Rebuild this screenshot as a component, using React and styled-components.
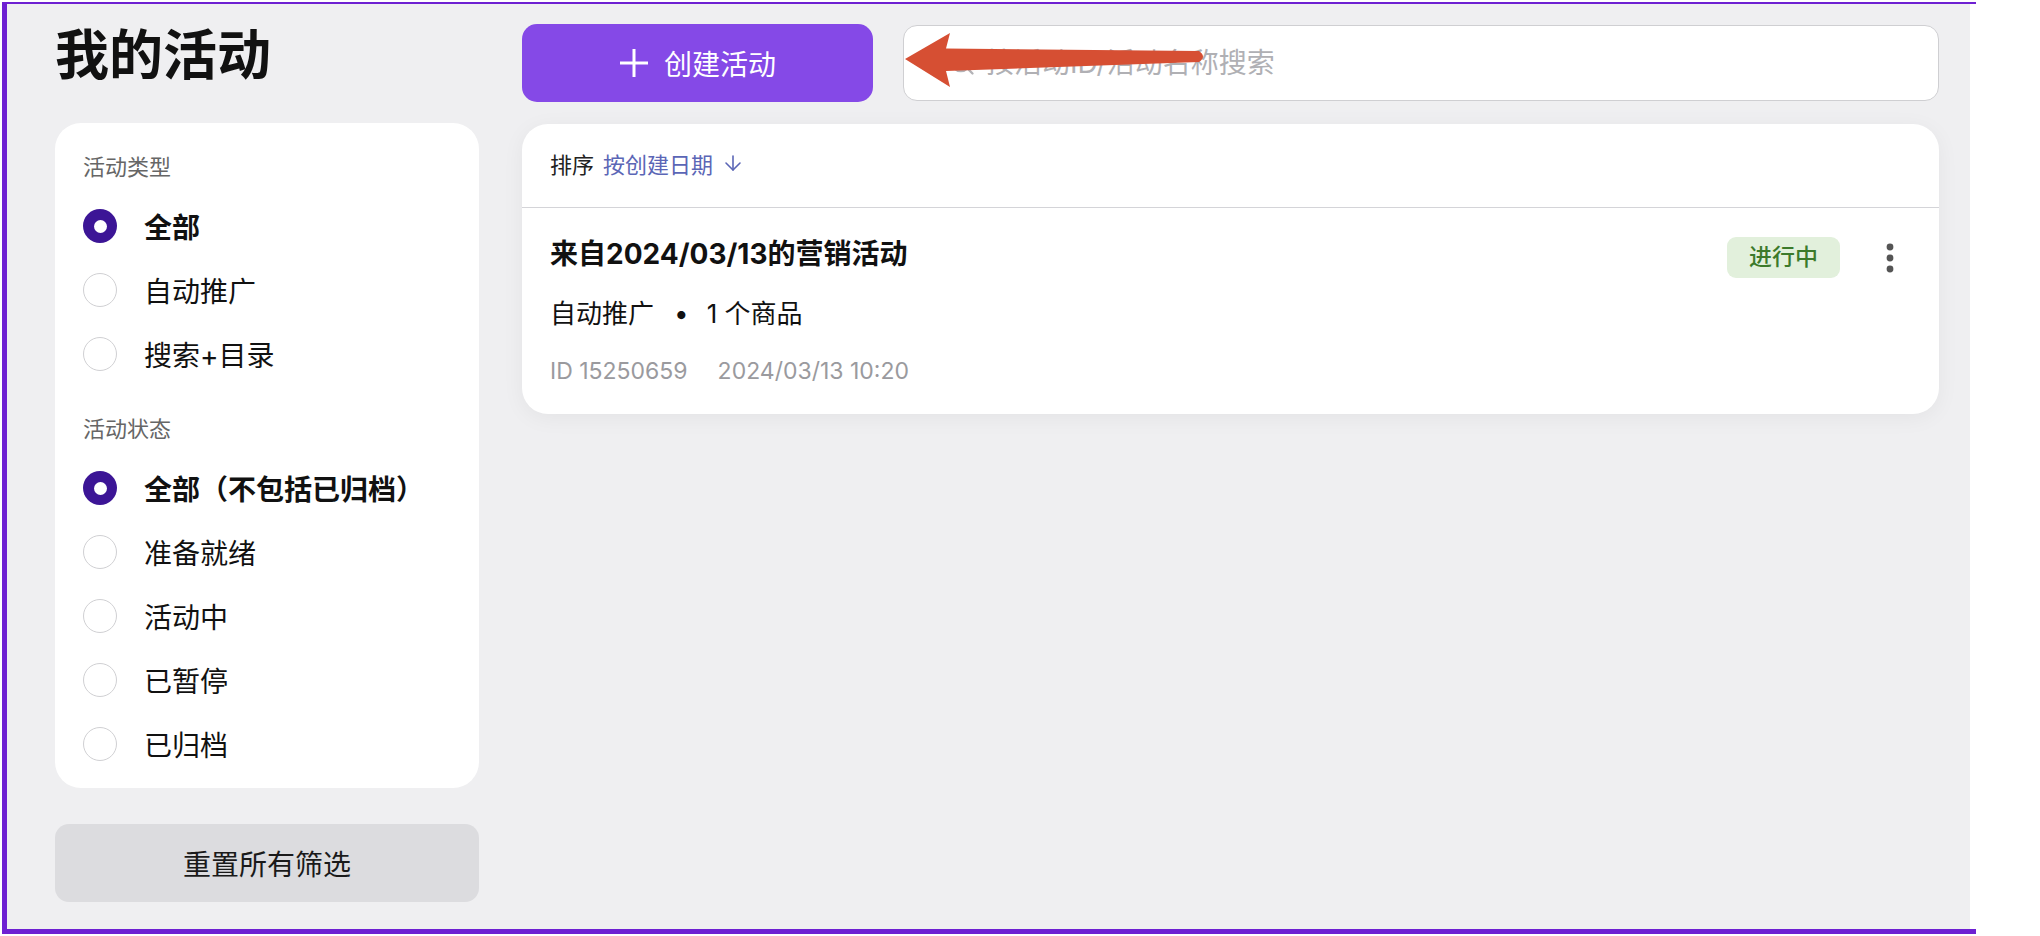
import React from 'react';
import styled, { createGlobalStyle } from 'styled-components';
import { Search, ArrowDown } from 'lucide-react';

const Global = createGlobalStyle`
  html, body { margin: 0; padding: 0; background: #fff; }
  body { font-family: Inter, "Noto Sans CJK SC", sans-serif; color: #111; }
  * { box-sizing: border-box; }
`;

const Frame = styled.div`
  position: relative;
  margin: 2px 0 0 2px;
  width: 1974px;
  height: 932px;
  border-left: 5px solid #6e20d2;
  border-top: 2px solid #6e20d2;
  border-bottom: 5px solid #6e20d2;
  background: linear-gradient(to right, #efeff1 calc(100% - 6px), #fff calc(100% - 6px));
  padding: 20px 37px 0 48px;
  display: grid;
  grid-template-columns: 424px 1fr;
  column-gap: 43px;
  align-items: start;
`;

const Sidebar = styled.aside`
  display: flex;
  flex-direction: column;
`;

const PageTitle = styled.h1`
  margin: 0 0 33px;
  height: 66px;
  font-size: 54px;
  line-height: 64px;
  font-weight: 700;
  color: #111;
`;

const FilterCard = styled.section`
  background: #fff;
  border-radius: 26px;
  padding: 29px 28px 12px;
  display: flex;
  flex-direction: column;
`;

const GroupLabel = styled.div`
  font-size: 22px;
  line-height: 30px;
  color: #666;
  margin-top: ${(p) => (p.$first ? '0' : '28px')};
  margin-bottom: 12px;
`;

const Option = styled.label`
  height: 64px;
  display: flex;
  align-items: center;
  gap: 27px;
  font-size: 28px;
  font-weight: ${(p) => (p.$checked ? 700 : 400)};
  color: #111;
`;

const Radio = styled.span`
  position: relative;
  flex: none;
  width: 34px;
  height: 34px;
  border-radius: 50%;
  background: ${(p) => (p.$checked ? '#3c1596' : '#fff')};
  border: ${(p) => (p.$checked ? 'none' : '1.5px solid #d0d0d3')};
  &::after {
    content: '';
    display: ${(p) => (p.$checked ? 'block' : 'none')};
    position: absolute;
    left: 50%;
    top: 50%;
    width: 13px;
    height: 13px;
    margin: -6.5px 0 0 -6.5px;
    border-radius: 50%;
    background: #fff;
  }
`;

const ResetButton = styled.button`
  margin-top: 36px;
  height: 78px;
  border: none;
  border-radius: 14px;
  background: #dcdcdf;
  font-family: inherit;
  font-size: 28px;
  color: #1a1a1a;
`;

const Main = styled.main`
  display: flex;
  flex-direction: column;
`;

const Toolbar = styled.div`
  display: flex;
  align-items: center;
  gap: 30px;
  height: 78px;
`;

const CreateButton = styled.button`
  flex: none;
  width: 351px;
  height: 78px;
  border: none;
  border-radius: 15px;
  background: #8549e7;
  color: #fff;
  font-family: inherit;
  font-size: 28px;
  display: flex;
  align-items: center;
  justify-content: center;
  gap: 15px;
`;

const SearchBox = styled.label`
  flex: 1;
  height: 76px;
  display: flex;
  align-items: center;
  gap: 8px;
  padding-left: 44px;
  background: #fff;
  border: 1.5px solid #cfcfd2;
  border-radius: 14px;
  color: #b3b3b7;
`;

const SearchInput = styled.input`
  flex: 1;
  border: none;
  outline: none;
  background: transparent;
  font-family: inherit;
  font-size: 28px;
  color: #222;
  &::placeholder { color: #b0b0b4; }
`;

const ListCard = styled.section`
  margin-top: 22px;
  background: #fff;
  border-radius: 26px;
  box-shadow: 0 4px 22px rgba(0, 0, 0, 0.05);
  overflow: hidden;
`;

const SortBar = styled.div`
  height: 84px;
  display: flex;
  align-items: center;
  padding: 0 28px 6px;
  border-bottom: 1px solid #d4d4d8;
  font-size: 22px;
  color: #222;
`;

const SortValue = styled.span`
  margin-left: 9px;
  color: #5b66b6;
  display: inline-flex;
  align-items: center;
  gap: 8px;
`;

const Item = styled.article`
  display: flex;
  justify-content: space-between;
  align-items: flex-start;
  padding: 28px 29px 28px 28px;
`;

const ItemBody = styled.div`
  display: flex;
  flex-direction: column;
`;

const ItemTitle = styled.div`
  font-size: 28px;
  line-height: 36px;
  font-weight: 700;
  color: #111;
`;

const ItemSub = styled.div`
  margin-top: 24px;
  font-size: 26px;
  line-height: 36px;
  color: #111;
`;

const Bullet = styled.span`
  margin: 0 18px 0 20px;
`;

const ItemMeta = styled.div`
  margin-top: 24px;
  font-size: 23px;
  line-height: 30px;
  color: #9a9a9e;
  display: flex;
  gap: 30px;
`;

const ItemActions = styled.div`
  display: flex;
  align-items: center;
  gap: 30px;
  margin-top: 1px;
`;

const Badge = styled.span`
  height: 41px;
  line-height: 41px;
  padding: 0 22px;
  border-radius: 9px;
  background: #e2f0dc;
  color: #3c7a2b;
  font-size: 23px;
  font-weight: 500;
`;

const KebabButton = styled.button`
  width: 40px;
  height: 40px;
  border: none;
  background: transparent;
  display: flex;
  align-items: center;
  justify-content: center;
  padding: 0;
`;

const ArrowOverlay = styled.svg`
  position: absolute;
  left: 893px;
  top: 24px;
  pointer-events: none;
`;

const typeOptions = [
  { label: '全部', checked: true },
  { label: '自动推广' },
  { label: '搜索+目录' },
];

const statusOptions = [
  { label: '全部（不包括已归档）', checked: true },
  { label: '准备就绪' },
  { label: '活动中' },
  { label: '已暂停' },
  { label: '已归档' },
];

export default function App() {
  return (
    <>
      <Global />
      <Frame>
        <Sidebar>
          <PageTitle>我的活动</PageTitle>
          <FilterCard>
            <GroupLabel $first>活动类型</GroupLabel>
            {typeOptions.map((o) => (
              <Option key={o.label} $checked={o.checked}>
                <Radio $checked={o.checked} />
                {o.label}
              </Option>
            ))}
            <GroupLabel>活动状态</GroupLabel>
            {statusOptions.map((o) => (
              <Option key={o.label} $checked={o.checked}>
                <Radio $checked={o.checked} />
                {o.label}
              </Option>
            ))}
          </FilterCard>
          <ResetButton>重置所有筛选</ResetButton>
        </Sidebar>

        <Main>
          <Toolbar>
            <CreateButton>
              <svg width="30" height="30" viewBox="0 0 30 30">
                <path d="M15 1v28M1 15h28" stroke="#fff" strokeWidth="3" />
              </svg>
              创建活动
            </CreateButton>
            <SearchBox>
              <Search size={28} strokeWidth={2} />
              <SearchInput placeholder="按活动ID/活动名称搜索" />
            </SearchBox>
          </Toolbar>

          <ListCard>
            <SortBar>
              排序
              <SortValue>
                按创建日期
                <ArrowDown size={24} strokeWidth={1.6} />
              </SortValue>
            </SortBar>
            <Item>
              <ItemBody>
                <ItemTitle>来自2024/03/13的营销活动</ItemTitle>
                <ItemSub>
                  自动推广<Bullet>•</Bullet>1 个商品
                </ItemSub>
                <ItemMeta>
                  <span>ID 15250659</span>
                  <span>2024/03/13 10:20</span>
                </ItemMeta>
              </ItemBody>
              <ItemActions>
                <Badge>进行中</Badge>
                <KebabButton>
                  <svg width="8" height="30" viewBox="0 0 8 30">
                    <circle cx="4" cy="4" r="3.4" fill="#555" />
                    <circle cx="4" cy="15" r="3.4" fill="#555" />
                    <circle cx="4" cy="26" r="3.4" fill="#555" />
                  </svg>
                </KebabButton>
              </ItemActions>
            </Item>
          </ListCard>
        </Main>

        <ArrowOverlay width="310" height="64" viewBox="900 28 310 64">
          <path
            d="M905 59 L950 33 L946 48.5 L1199 51 Q1207 56.5 1199 62 L946 71 L950 87 Z"
            fill="#d64f33"
          />
        </ArrowOverlay>
      </Frame>
    </>
  );
}
